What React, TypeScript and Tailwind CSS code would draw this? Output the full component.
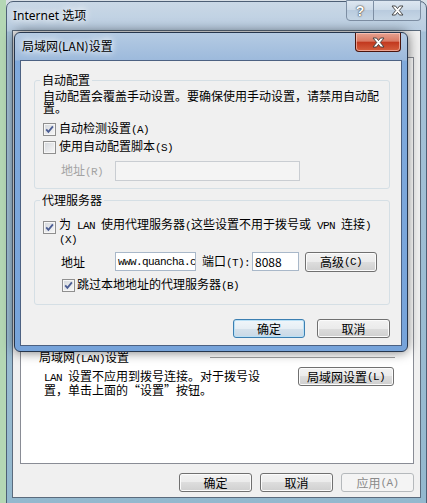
import React from 'react';

const M = ({ children }: { children: React.ReactNode }) => (
  <span className="font-['Liberation_Mono',monospace] text-[11px] tracking-[-0.6px]">{children}</span>
);

const Check = ({ checked }: { checked?: boolean }) => (
  <span className="flex h-[13px] w-[13px] shrink-0 items-center justify-center border border-[#8f8f8f] bg-[linear-gradient(135deg,#d3d7dc,#f8f8f8)] shadow-[inset_0_0_0_1px_#f6f6f6]">
    {checked && (
      <svg width="11" height="11" viewBox="0 0 11 11">
        <path d="M2.2 5.4 L4.4 7.9 L8.9 2.4" fill="none" stroke="#4b5d93" strokeWidth="1.8" />
      </svg>
    )}
  </span>
);

type BtnProps = { children: React.ReactNode; className?: string; kind?: 'def' | 'off' };

const Btn = ({ children, className = '', kind }: BtnProps) => {
  const look =
    kind === 'def'
      ? 'border-[#3c7fb1] shadow-[inset_0_0_0_1px_#b9e0f6] bg-[linear-gradient(to_bottom,#f0f6fa_0%,#e6eef4_50%,#d6e2ec_50%,#c8d8e6_100%)]'
      : kind === 'off'
        ? 'border-[#b5b9bc] bg-[#f4f4f4] text-[#8a8a8a]'
        : 'border-[#707070] shadow-[inset_0_0_0_1px_#fbfbfb] bg-[linear-gradient(to_bottom,#f2f2f2_0%,#ebebeb_50%,#dddddd_50%,#cfcfcf_100%)]';
  return (
    <div className={`flex items-center justify-center rounded-[3px] border leading-[14px] ${look} ${className}`}>
      {children}
    </div>
  );
};

const XGlyph = () => (
  <svg width="13" height="11" viewBox="0 0 13 11">
    <path
      d="M1 1 H4.5 L6.5 3.6 L8.5 1 H12 L8.3 5.5 L12 10 H8.5 L6.5 7.4 L4.5 10 H1 L4.7 5.5 Z"
      fill="#fff"
      stroke="#3a3a3a"
      strokeWidth="0.9"
      strokeLinejoin="round"
    />
  </svg>
);

export default function App() {
  return (
    <div className="relative h-[503px] w-[427px] overflow-hidden bg-[linear-gradient(to_right,#b4d7b4_0px,#b4d7b4_6px,#d8dfe6_6px)] font-['Noto_Sans_CJK_SC',sans-serif] text-[12px] leading-[14px] text-black">
      {/* Internet 选项 */}
      <div className="absolute left-[6px] top-[1px] flex h-[503px] w-[421px] flex-col rounded-t-[7px] border border-[#4d5f75] bg-[linear-gradient(to_bottom,#cad8e6_0px,#b9cde1_29px,#a6c2d8_30px,#93b8ce_100%)]">
        <div className="flex h-[28px] items-start pl-[6px] pr-[5px]">
          <span className="mt-[7px] font-['Noto_Sans','Noto_Sans_CJK_SC',sans-serif] [text-shadow:0_0_6px_#fff,0_0_10px_#fff]">
            Internet 选项
          </span>
          <div className="ml-auto -mt-[2px] flex h-[21px]">
            <div className="flex w-[28px] items-center justify-center rounded-bl-[4px] border border-[#7d8ea3] bg-[linear-gradient(to_bottom,#dde7f1_0%,#cbd9e7_50%,#b9cbde_50%,#c7d7e6_100%)] font-['Liberation_Sans',sans-serif] text-[14px] font-bold text-white [text-shadow:0_0_1px_#333,0_0_2px_#333]">
              ?
            </div>
            <div className="flex w-[47px] items-center justify-center rounded-br-[4px] border border-l-0 border-[#7d8ea3] bg-[linear-gradient(to_bottom,#dde7f1_0%,#cbd9e7_50%,#b9cbde_50%,#c7d7e6_100%)]">
              <XGlyph />
            </div>
          </div>
        </div>

        <div className="mx-[5px] mb-[5px] flex flex-1 flex-col border border-[#5b6b7d] bg-[#f0f0f0] pl-[7px] pr-[6px]">
          <div className="mt-[26px] flex flex-1 flex-col justify-end border border-[#898c95] bg-white">
            <div className="flex h-[14px] items-center">
              <span className="ml-[18px]">
                局域网<M>(LAN)</M>设置
              </span>
              <span className="ml-auto mr-[18px] h-[2px] w-[185px] border-t border-b border-t-[#a0a0a0] border-b-white" />
            </div>
            <div className="mt-[2px] flex items-start pb-[67px]">
              <p className="ml-[23px] mt-[3px] leading-[12px]">
                <M>LAN </M>设置不应用到拨号连接。对于拨号设
                <br />
                置，单击上面的“设置”按钮。
              </p>
              <Btn className="ml-auto mr-[19px] h-[19px] w-[96px]">
                局域网设置<M>(L)</M>
              </Btn>
            </div>
          </div>
          <div className="mb-[5px] mt-[9px] flex h-[19px] justify-end gap-[8px]">
            <Btn className="w-[73px]">确定</Btn>
            <Btn className="w-[73px]">取消</Btn>
            <Btn className="w-[73px]" kind="off">
              应用<M>(A)</M>
            </Btn>
          </div>
        </div>
      </div>

      {/* 局域网(LAN)设置 dialog */}
      <div className="absolute left-[14px] top-[32px] flex h-[320px] w-[394px] flex-col rounded-[6px] border border-[#26364d] bg-[linear-gradient(to_bottom,#b5cbe3_0px,#9dbadc_27px,#80aadc_28px,#76a3da_100%)] shadow-[0_0_12px_rgba(0,0,0,0.55)]">
        <div className="flex h-[27px] items-start pl-[7px] pr-[6px]">
          <span className="mt-[6px] [text-shadow:0_0_6px_#fff,0_0_10px_#fff]">局域网(LAN)设置</span>
          <div className="ml-auto flex h-[19px] w-[46px] items-center justify-center rounded-b-[4px] border border-t-0 border-[#4a140c] bg-[linear-gradient(to_bottom,#e6a291_0%,#d97a64_45%,#c2391f_52%,#d5603f_100%)] shadow-[inset_0_0_0_1px_rgba(255,210,200,0.6)]">
            <XGlyph />
          </div>
        </div>

        <div className="mx-[5px] mb-[5px] flex flex-1 flex-col border border-[#4c6182] bg-[#f0f0f0]">
          <fieldset className="ml-[13px] mt-[12px] w-[356px] rounded-[3px] border border-[#d5dfe5]">
            <legend className="ml-[5px] px-[2px] leading-[14px]">自动配置</legend>
            <div className="flex flex-col pb-[7px] pl-[8px] pt-[3px]">
              <p className="leading-[12px]">
                自动配置会覆盖手动设置。要确保使用手动设置，请禁用自动配
                <br />
                置。
              </p>
              <label className="mt-[8px] flex h-[14px] items-center gap-[3px]">
                <Check checked />
                <span>
                  自动检测设置<M>(A)</M>
                </span>
              </label>
              <label className="mt-[4px] flex h-[14px] items-center gap-[3px]">
                <Check />
                <span>
                  使用自动配置脚本<M>(S)</M>
                </span>
              </label>
              <div className="mt-[6px] flex h-[21px] items-center">
                <span className="ml-[18px] w-[54px] text-[#a3a3a3]">
                  地址<M>(R)</M>
                </span>
                <div className="h-[20px] w-[185px] border border-[#c9cdd2] bg-[#f4f4f4]" />
              </div>
            </div>
          </fieldset>

          <fieldset className="ml-[13px] mt-[4px] w-[356px] rounded-[3px] border border-[#d5dfe5]">
            <legend className="ml-[5px] px-[2px] leading-[14px]">代理服务器</legend>
            <div className="flex flex-col pb-[12px] pl-[8px] pt-[11px]">
              <div className="flex items-start gap-[3px]">
                <span className="mt-[3px]">
                  <Check checked />
                </span>
                <p className="leading-[12px]">
                  为<M> LAN </M>使用代理服务器<M>(</M>这些设置不用于拨号或<M> VPN </M>连接<M>)</M>
                  <br />
                  <M>(X)</M>
                </p>
              </div>
              <div className="mt-[5px] flex h-[21px] items-center">
                <span className="ml-[18px] w-[54px]">地址</span>
                <div className="flex h-[19px] w-[81px] items-center overflow-hidden whitespace-nowrap border border-[#a9b8c9] bg-white pl-[2px]">
                  <M>www.quancha.cn</M>
                </div>
                <span className="ml-[6px] w-[50px]">
                  端口<M>(T):</M>
                </span>
                <div className="flex h-[19px] w-[47px] items-center border border-[#a9b8c9] bg-white pl-[2px]">8088</div>
                <Btn className="ml-[6px] h-[20px] w-[72px]">
                  高级<M>(C)</M>
                </Btn>
              </div>
              <label className="ml-[19px] mt-[6px] flex h-[14px] items-center gap-[2px]">
                <Check checked />
                <span>
                  跳过本地地址的代理服务器<M>(B)</M>
                </span>
              </label>
            </div>
          </fieldset>

          <div className="mt-[14px] flex h-[19px] justify-end gap-[12px] pr-[11px]">
            <Btn className="w-[72px]" kind="def">
              确定
            </Btn>
            <Btn className="w-[73px]">取消</Btn>
          </div>
        </div>
      </div>
    </div>
  );
}
